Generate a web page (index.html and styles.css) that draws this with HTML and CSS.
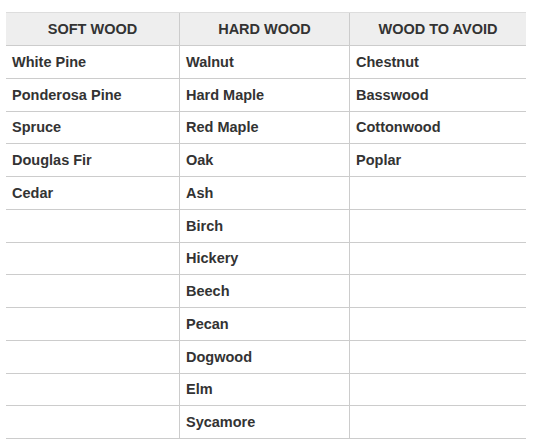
FILE: index.html
```html
<!DOCTYPE html>
<html>
<head>
<meta charset="utf-8">
<link rel="stylesheet" href="styles.css">
</head>
<body>
<table class="wood">
  <thead>
    <tr><th>SOFT WOOD</th><th>HARD WOOD</th><th>WOOD TO AVOID</th></tr>
  </thead>
  <tbody>
    <tr><td>White Pine</td><td>Walnut</td><td>Chestnut</td></tr>
    <tr><td>Ponderosa Pine</td><td>Hard Maple</td><td>Basswood</td></tr>
    <tr><td>Spruce</td><td>Red Maple</td><td>Cottonwood</td></tr>
    <tr><td>Douglas Fir</td><td>Oak</td><td>Poplar</td></tr>
    <tr><td>Cedar</td><td>Ash</td><td></td></tr>
    <tr><td></td><td>Birch</td><td></td></tr>
    <tr><td></td><td>Hickery</td><td></td></tr>
    <tr><td></td><td>Beech</td><td></td></tr>
    <tr><td></td><td>Pecan</td><td></td></tr>
    <tr><td></td><td>Dogwood</td><td></td></tr>
    <tr><td></td><td>Elm</td><td></td></tr>
    <tr><td></td><td>Sycamore</td><td></td></tr>
  </tbody>
</table>
</body>
</html>
```
FILE: styles.css
```css
html, body {
  margin: 0;
  padding: 0;
  background: #fff;
}
body {
  padding: 12px 0 0 6px;
  font-family: "Liberation Sans", Arial, sans-serif;
  color: #333;
}
.wood {
  width: 520px;
  border-collapse: collapse;
  table-layout: fixed;
  font-size: 14.5px;
  font-weight: bold;
}
.wood th {
  background: #eee;
  text-align: center;
  height: 32px;
  padding: 0 6px;
  border-top: 1px solid #ddd;
  border-bottom: 1px solid #ccc;
  border-left: 1px solid #ccc;
}
.wood th:nth-child(1), .wood td:nth-child(1) { width: 161px; }
.wood th:nth-child(2), .wood td:nth-child(2) { width: 157px; }
.wood td {
  text-align: left;
  height: 31.75px;
  padding: 0 6px;
  border-bottom: 1px solid #ccc;
  border-left: 1px solid #ccc;
}
.wood th:first-child, .wood td:first-child { border-left: none; }
```
